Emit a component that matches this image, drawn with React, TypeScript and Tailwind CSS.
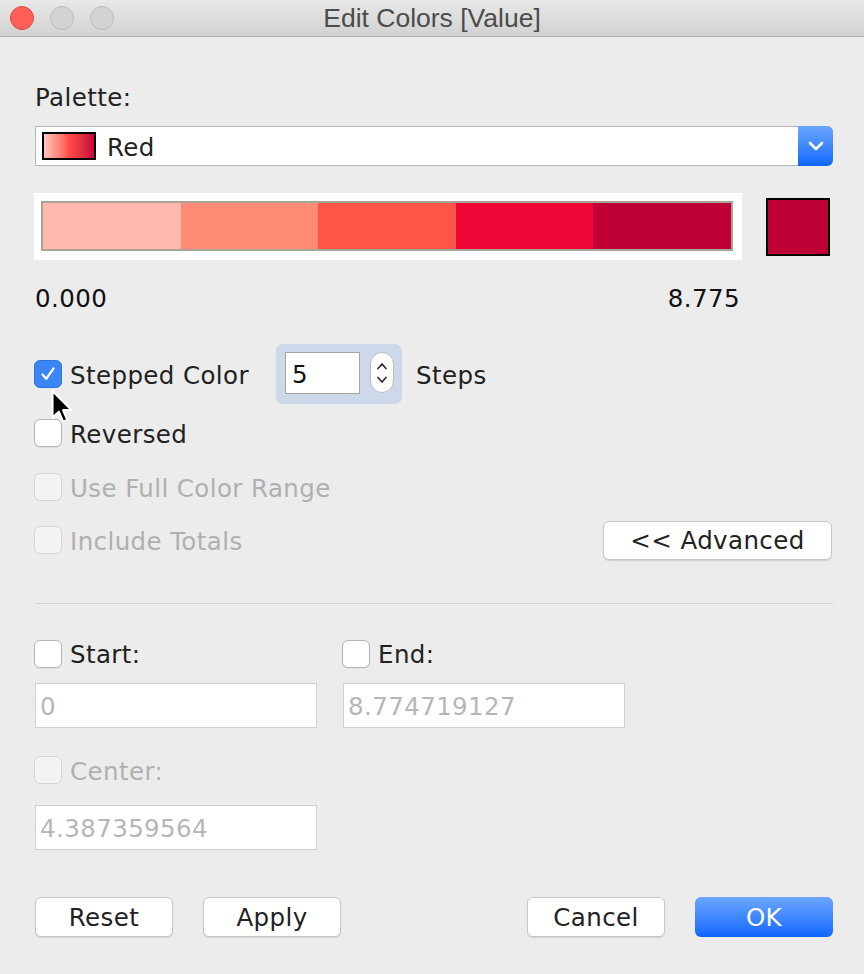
import React from "react";

const FONT = { fontFamily: '"DejaVu Sans", "Noto Sans", sans-serif' };

function Checkbox({ checked = false, disabled = false }: { checked?: boolean; disabled?: boolean }) {
  if (checked) {
    return (
      <div className="w-[28px] h-[28px] rounded-[6px] bg-[#3a86f6] border border-[#2f73dc] flex items-center justify-center shrink-0">
        <svg width="18" height="16" viewBox="0 0 18 16">
          <path d="M3.5 8.5 L7.2 12.8 L14.5 2.5" fill="none" stroke="white" strokeWidth="2.2" strokeLinecap="round" strokeLinejoin="round" />
        </svg>
      </div>
    );
  }
  return (
    <div
      className={
        disabled
          ? "w-[28px] h-[28px] rounded-[6px] bg-[#f3f3f3] border border-[#d6d6d6] shrink-0"
          : "w-[28px] h-[28px] rounded-[6px] bg-white border border-[#b5b5b5] shadow-[0_1px_0_rgba(0,0,0,0.06)] shrink-0"
      }
    />
  );
}

function CheckRow({ label, checked, disabled }: { label: string; checked?: boolean; disabled?: boolean }) {
  return (
    <div className="flex items-center gap-[8px]">
      <Checkbox checked={checked} disabled={disabled} />
      <span className={disabled ? "mt-[3px] text-[#b0b0b0]" : "mt-[3px] text-[#222]"}>{label}</span>
    </div>
  );
}

function Button({ label, primary }: { label: string; primary?: boolean }) {
  return (
    <div
      className={
        primary
          ? "w-[138px] h-[40px] rounded-[6px] bg-gradient-to-b from-[#6ba6fe] to-[#0b65fe] text-white flex items-center justify-center pt-[2px]"
          : "w-[138px] h-[40px] rounded-[6px] bg-white border border-[#c8c8c8] shadow-[0_1px_1px_rgba(0,0,0,0.12)] text-[#222] flex items-center justify-center pt-[2px]"
      }
    >
      {label}
    </div>
  );
}

export default function App() {
  const segs = ["#ffb9ae", "#ff8b76", "#ff5548", "#ee0637", "#be0036"];
  return (
    <div className="w-[864px] h-[974px] bg-[#ececec] flex flex-col text-[24.5px] tracking-[0.4px] leading-[30px] relative overflow-hidden" style={FONT}>
      {/* Title bar */}
      <div className="h-[37px] shrink-0 bg-gradient-to-b from-[#e8e8e8] to-[#d2d2d2] border-b border-[#b2b2b2] grid grid-cols-[1fr_auto_1fr] items-center">
        <div className="flex items-center gap-[16px] pl-[10px]">
          <div className="w-[24px] h-[24px] rounded-full bg-[#fe5f57] border border-[#e1463f]" />
          <div className="w-[24px] h-[24px] rounded-full bg-[#d3d3d3] border border-[#bcbcbc]" />
          <div className="w-[24px] h-[24px] rounded-full bg-[#d3d3d3] border border-[#bcbcbc]" />
        </div>
        <div className="text-[26.5px] tracking-normal text-[#4c4c4c]" style={{ fontFamily: '"Liberation Sans", Arial, sans-serif' }}>
          Edit Colors [Value]
        </div>
        <div />
      </div>

      <div className="pl-[35px] pr-[31px] flex flex-col">
        <div className="mt-[44px] h-[30px] pt-[2px] text-[#222]">Palette:</div>

        {/* Dropdown */}
        <div className="mt-[15px] h-[40px] flex bg-white border border-[#b6b6b6] rounded-r-[6px]">
          <div className="flex-1 flex items-center pl-[6px] gap-[11px]">
            <div className="w-[54px] h-[28px] border-2 border-black bg-gradient-to-r from-[#ffc6bd] via-[#ff4a45] to-[#c8003a]" />
            <span className="mt-[4px] text-[#222]">Red</span>
          </div>
          <div className="w-[35px] -my-px -mr-px rounded-r-[6px] bg-gradient-to-b from-[#6ba6fe] to-[#0b65fe] flex items-center justify-center">
            <svg width="16" height="10" viewBox="0 0 16 10">
              <path d="M2 2 L8 8 L14 2" fill="none" stroke="white" strokeWidth="2.6" strokeLinecap="round" strokeLinejoin="round" />
            </svg>
          </div>
        </div>

        {/* Color bar */}
        <div className="mt-[27px] h-[67px] flex items-center -ml-px">
          <div className="w-[708px] h-[67px] bg-white pl-[7px] pt-[8px]">
            <div className="w-[692px] h-[50px] border-2 border-[#a9a596] flex">
              {segs.map((c) => (
                <div key={c} className="flex-1" style={{ backgroundColor: c }} />
              ))}
            </div>
          </div>
          <div className="ml-[24px] w-[64px] h-[58px] bg-[#be0036] border-2 border-black" />
        </div>

        {/* numbers */}
        <div className="mt-[22px] h-[30px] pt-[2px] w-[705px] flex justify-between text-[#111]">
          <span>0.000</span>
          <span>8.775</span>
        </div>

        {/* Stepped row */}
        <div className="mt-[32px] h-[60px] flex items-center -ml-px">
          <div className="w-[242px]">
            <CheckRow label="Stepped Color" checked />
          </div>
          <div className="w-[126px] h-[60px] rounded-[7px] bg-[#cdd9ea] flex items-start pl-[9px] pt-[8px] gap-[10px]">
            <div className="w-[75px] h-[42px] bg-white border border-[#a5a5a5] flex items-center pl-[6px] pt-[3px] text-[#111]">5</div>
            <div className="w-[24px] h-[41px] bg-white border border-[#bdbdbd] rounded-[12px] flex flex-col items-center justify-center gap-[6px]">
              <svg width="12" height="8" viewBox="0 0 12 8">
                <path d="M2 6.5 L6 2 L10 6.5" fill="none" stroke="#333" strokeWidth="1.8" strokeLinecap="round" strokeLinejoin="round" />
              </svg>
              <svg width="12" height="8" viewBox="0 0 12 8">
                <path d="M2 1.5 L6 6 L10 1.5" fill="none" stroke="#333" strokeWidth="1.8" strokeLinecap="round" strokeLinejoin="round" />
              </svg>
            </div>
          </div>
          <span className="ml-[14px] mt-[3px] text-[#222]">Steps</span>
        </div>

        <div className="mt-[14px] h-[30px] flex items-center -ml-px">
          <CheckRow label="Reversed" />
        </div>
        <div className="mt-[24px] h-[30px] flex items-center -ml-px">
          <CheckRow label="Use Full Color Range" disabled />
        </div>
        <div className="mt-[18px] h-[40px] flex items-center justify-between -ml-px">
          <CheckRow label="Include Totals" disabled />
          <div className="w-[229px] h-[39px] rounded-[6px] bg-white border border-[#c8c8c8] shadow-[0_1px_1px_rgba(0,0,0,0.12)] text-[#222] flex items-center justify-center pt-[2px] mr-px">
            &lt;&lt; Advanced
          </div>
        </div>

        <div className="mt-[43px] h-px bg-[#d2d2d2]" />

        {/* Start / End */}
        <div className="mt-[33px] h-[30px] grid grid-cols-[308px_282px] items-center -ml-px">
          <CheckRow label="Start:" />
          <CheckRow label="End:" />
        </div>
        <div className="mt-[16px] h-[45px] grid grid-cols-[282px_282px] gap-[26px] text-[#b6b6b6]">
          <div className="bg-white border border-[#d0d0d0] flex items-center pl-[4px] pt-[3px]">0</div>
          <div className="bg-white border border-[#d0d0d0] flex items-center pl-[4px] pt-[3px]">8.774719127</div>
        </div>

        <div className="mt-[27px] h-[30px] flex items-center -ml-px">
          <CheckRow label="Center:" disabled />
        </div>
        <div className="mt-[20px] h-[45px] w-[282px] bg-white border border-[#d0d0d0] flex items-center pl-[4px] pt-[3px] text-[#b6b6b6]">
          4.387359564
        </div>

        {/* Buttons */}
        <div className="mt-[47px] h-[40px] flex items-center">
          <div className="flex gap-[30px]">
            <Button label="Reset" />
            <Button label="Apply" />
          </div>
          <div className="ml-auto flex gap-[30px]">
            <Button label="Cancel" />
            <Button label="OK" primary />
          </div>
        </div>
      </div>

      {/* mouse cursor overlay */}
      <svg className="absolute left-[49px] top-[389px]" width="26" height="38" viewBox="0 0 24 36">
        <path d="M3 2 L3 27 L9 21.5 L13 31 L17 29.3 L13 20 L21 20 Z" fill="black" stroke="white" strokeWidth="2" strokeLinejoin="round" />
      </svg>
    </div>
  );
}
